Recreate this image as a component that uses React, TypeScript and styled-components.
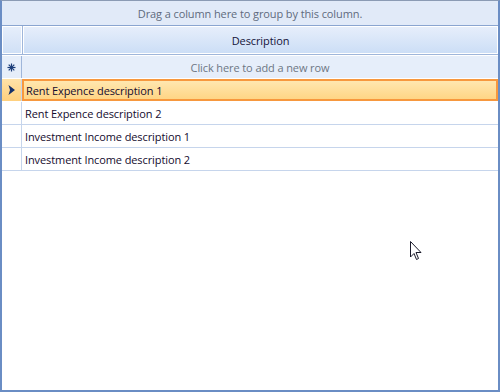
import styled, { createGlobalStyle } from "styled-components";

const GlobalStyle = createGlobalStyle`
  html, body {
    margin: 0;
    padding: 0;
    background: #ffffff;
  }
  body {
    font-family: "Segoe UI", "Open Sans", "Noto Sans", sans-serif;
    font-size: 11px;
    letter-spacing: -0.1px;
  }
`;

const Grid = styled.div`
  position: relative;
  box-sizing: border-box;
  width: 500px;
  height: 392px;
  border: 2px solid #6a8dc4;
  border-top: 1px solid #8b9bb4;
  background: #ffffff;
  display: flex;
  flex-direction: column;
  overflow: hidden;
`;

const GroupPanel = styled.div`
  height: 24px;
  display: flex;
  align-items: center;
  justify-content: center;
  background: #e1eaf8;
  color: #5f6b7d;
  border-bottom: 1px solid #8aa5d0;
`;

const HeaderRow = styled.div`
  display: flex;
  height: 28px;
  border-bottom: 1px solid #9fb6da;
`;

const IndicatorCell = styled.div<{ $header?: boolean; $bg?: string }>`
  box-sizing: border-box;
  width: 20px;
  flex: none;
  display: flex;
  align-items: center;
  justify-content: center;
  border-right: 1px solid ${p => (p.$header ? "#9fb6da" : "#c6d5ec")};
  background: ${p => p.$bg || "transparent"};
`;

const HeaderIndicator = styled(IndicatorCell)`
  border: 1px solid #ffffff;
  box-shadow: 1px 0 0 #9fb6da;
  margin-right: 1px;
  background: linear-gradient(#e6eefb, #d0e0f6);
`;

const HeaderCell = styled.div`
  box-sizing: border-box;
  flex: 1;
  display: flex;
  align-items: center;
  justify-content: center;
  color: #15143a;
  border: 1px solid #ffffff;
  background: linear-gradient(#e6eefb, #ccdef6);
`;

const NewRow = styled.div`
  display: flex;
  height: 22px;
  margin-top: 1px;
  background: #e6eefa;
  border-bottom: 1px solid #fff;
`;

const NewRowText = styled.div`
  flex: 1;
  display: flex;
  align-items: center;
  justify-content: center;
  color: #6d7684;
`;

const DataRow = styled.div<{ $selected?: boolean }>`
  display: flex;
  height: 23px;
  box-sizing: border-box;
  border-bottom: 1px solid ${p => (p.$selected ? "transparent" : "#c6d5ec")};
`;

const DataCell = styled.div<{ $selected?: boolean }>`
  box-sizing: border-box;
  flex: 1;
  display: flex;
  align-items: center;
  padding-left: ${p => (p.$selected ? "2px" : "3px")};
  color: #140b2e;
  ${p =>
    p.$selected
      ? `
    border: 2px solid #f7983e;
    background: linear-gradient(#ffe7b0, #ffd585);
  `
      : ""}
`;

const Cursor = styled.svg`
  position: absolute;
  left: 408px;
  top: 240px;
`;

const rows = [
  "Rent Expence description 1",
  "Rent Expence description 2",
  "Investment Income description 1",
  "Investment Income description 2",
];

const Asterisk = () => (
  <svg width="9" height="9" viewBox="0 0 9 9">
    <g stroke="#1c3e7a" strokeWidth="1.2">
      <line x1="4.5" y1="0.5" x2="4.5" y2="8.5" />
      <line x1="0.5" y1="4.5" x2="8.5" y2="4.5" />
      <line x1="1.7" y1="1.7" x2="7.3" y2="7.3" />
      <line x1="7.3" y1="1.7" x2="1.7" y2="7.3" />
    </g>
  </svg>
);

const Arrow = () => (
  <svg width="7" height="10" viewBox="0 0 7 10">
    <path d="M0.5 0 L7 5 L0.5 10 L2 5 Z" fill="#15306a" />
  </svg>
);

export default function App() {
  return (
    <>
      <GlobalStyle />
      <Grid>
        <GroupPanel>Drag a column here to group by this column.</GroupPanel>
        <HeaderRow>
          <HeaderIndicator $header />
          <HeaderCell>Description</HeaderCell>
        </HeaderRow>
        <NewRow>
          <IndicatorCell $header>
            <Asterisk />
          </IndicatorCell>
          <NewRowText>Click here to add a new row</NewRowText>
        </NewRow>
        {rows.map((r, i) => (
          <DataRow key={r} $selected={i === 0}>
            <IndicatorCell $bg={i === 0 ? "linear-gradient(#ffe2a8, #ffd07e)" : undefined}>
              {i === 0 && <Arrow />}
            </IndicatorCell>
            <DataCell $selected={i === 0}>{r}</DataCell>
          </DataRow>
        ))}
        <Cursor width="12" height="20" viewBox="0 0 12 20">
          <path
            d="M0.5 0.5 L0.5 16 L4 12.5 L6.5 18.5 L8.5 17.5 L6 11.5 L11 11.5 Z"
            fill="#ffffff"
            stroke="#1a1a2a"
            strokeWidth="1"
          />
        </Cursor>
      </Grid>
    </>
  );
}
